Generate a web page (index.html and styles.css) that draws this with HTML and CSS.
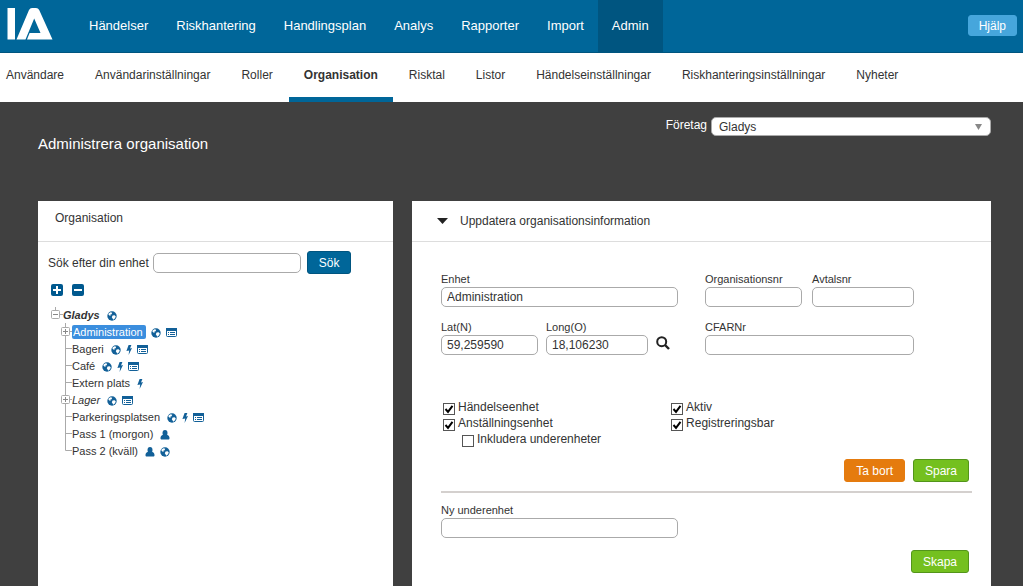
FILE: index.html
```html
<!DOCTYPE html>
<html lang="sv">
<head>
<meta charset="utf-8">
<meta name="viewport" content="width=device-width, initial-scale=1">
<title>Administrera organisation</title>
<link rel="stylesheet" href="styles.css">
</head>
<body>
<svg class="sprite" aria-hidden="true">
  <symbol id="globe" viewBox="0 0 10 10">
    <circle cx="5" cy="5" r="4.7" fill="#126098"/>
    <path d="M1.6 2.4 3.6 1.3 5.2 1.8 4.6 3.2 3.2 3.8 3.6 5 2.4 4.6 1.4 3.6zM5.6 4.6 7.6 4.3 8.8 5.4 8 7.2 6.4 8.7 5.6 7.4 4.8 6.2z" fill="#fff"/>
  </symbol>
  <symbol id="bolt" viewBox="0 0 6 10">
    <path d="M2.6 0h2.8L4 3.4 6 3 2.6 10l.6-4.600L.4 6z" fill="#126098"/>
  </symbol>
  <symbol id="card" viewBox="0 0 11 9">
    <rect x=".5" y=".5" width="10" height="8" rx="1" fill="#fff" stroke="#126098"/>
    <path d="M0 0h11v3H0z" fill="#126098"/>
    <path d="M2 4.500h1M4 4.500h5M2 6.500h1M4 6.500h5" stroke="#126098"/>
  </symbol>
  <symbol id="person" viewBox="0 0 10 10">
    <ellipse cx="5" cy="3" rx="2.500" ry="2.900" fill="#126098"/>
    <path d="M3.200 4.800C1.300 5.200.5 6.300.5 8.300c0 .8.500 1.300 1.300 1.300h6.400c.8 0 1.300-.5 1.300-1.300 0-2-.8-3.100-2.700-3.500z" fill="#126098"/>
  </symbol>
  <symbol id="leaf" viewBox="0 0 11 17">
    <path d="M4.500 0v17M4 8.500h7" stroke="#aaa" fill="none"/>
  </symbol>
  <symbol id="last" viewBox="0 0 11 17">
    <path d="M4.500 0v8.500H11" stroke="#aaa" fill="none"/>
  </symbol>
  <symbol id="closed" viewBox="0 0 11 17">
    <path d="M4.500 0v17M4 8.500h7" stroke="#aaa"/>
    <rect x=".5" y="4.500" width="8" height="8" rx="1" fill="#fff" stroke="#aaa"/>
    <path d="M2 8.500h5M4.500 6v5" stroke="#888"/>
  </symbol>
  <symbol id="open" viewBox="0 0 13 17">
    <path d="M5.500 1v4M9 8.500h4" stroke="#aaa"/>
    <rect x="1.500" y="4.500" width="8" height="8" rx="1" fill="#fff" stroke="#aaa"/>
    <path d="M3 8.500h5" stroke="#888"/>
  </symbol>
</svg>

<header class="topbar">
  <a class="logo" href="#" aria-label="IA">
    <svg width="46" height="32" viewBox="0 0 46 32" aria-hidden="true">
      <path d="M.5 0h7.500v31.500H.5z" fill="#fff"/>
      <path d="M9.500 31.500 22 2Q23 0 25 0h4Q31.200 0 32.200 2L45.500 31.500H20L22.600 25H33.500L27.200 10.500 18.500 31.500z" fill="#fff"/>
    </svg>
  </a>
  <nav class="mainnav">
    <a href="#">Händelser</a>
    <a href="#">Riskhantering</a>
    <a href="#">Handlingsplan</a>
    <a href="#">Analys</a>
    <a href="#">Rapporter</a>
    <a href="#">Import</a>
    <a href="#" class="active">Admin</a>
  </nav>
  <button type="button" class="btn help">Hjälp</button>
</header>

<nav class="subnav">
  <a href="#">Användare</a>
  <a href="#">Användarinställningar</a>
  <a href="#">Roller</a>
  <a href="#" class="active">Organisation</a>
  <a href="#">Risktal</a>
  <a href="#">Listor</a>
  <a href="#">Händelseinställningar</a>
  <a href="#">Riskhanteringsinställningar</a>
  <a href="#">Nyheter</a>
</nav>

<main class="page">
  <div class="pagehead">
    <h1>Administrera organisation</h1>
    <div class="company">
      <label for="company">Företag</label>
      <select id="company"><option>Gladys</option></select>
    </div>
  </div>

  <div class="panels">
    <section class="panel">
      <h2 class="panelhead">Organisation</h2>
      <div class="orgbody">
        <form class="search">
          <label for="find">Sök efter din enhet</label>
          <input id="find" type="text">
          <button type="button" class="btn primary">Sök</button>
        </form>
        <div class="expanders">
          <button type="button" class="plain" aria-label="Expandera alla">
            <svg width="12" height="12" viewBox="0 0 12 12"><rect width="12" height="12" rx="2" fill="#00598f"/><path d="M2 6h8M6 2v8" stroke="#fff" stroke-width="2"/></svg>
          </button>
          <button type="button" class="plain" aria-label="Minimera alla">
            <svg width="12" height="12" viewBox="0 0 12 12"><rect width="12" height="12" rx="2" fill="#00598f"/><path d="M2 6h8" stroke="#fff" stroke-width="2"/></svg>
          </button>
        </div>
        <ul class="tree">
          <li>
            <div class="node root">
              <button type="button" class="plain" aria-label="Stäng Gladys"><svg width="13" height="17"><use href="#open"/></svg></button>
              <a href="#">Gladys</a>
              <svg width="10" height="10"><use href="#globe"/></svg>
            </div>
            <ul>
              <li class="node">
                <button type="button" class="plain" aria-label="Öppna Administration"><svg width="11" height="17"><use href="#closed"/></svg></button>
                <a href="#" class="selected">Administration</a>
                <svg width="10" height="10"><use href="#globe"/></svg>
                <svg width="11" height="9"><use href="#card"/></svg>
              </li>
              <li class="node">
                <svg class="branch" width="11" height="17"><use href="#leaf"/></svg>
                <a href="#">Bageri</a>
                <svg width="10" height="10"><use href="#globe"/></svg>
                <svg width="6" height="10"><use href="#bolt"/></svg>
                <svg width="11" height="9"><use href="#card"/></svg>
              </li>
              <li class="node">
                <svg class="branch" width="11" height="17"><use href="#leaf"/></svg>
                <a href="#">Café</a>
                <svg width="10" height="10"><use href="#globe"/></svg>
                <svg width="6" height="10"><use href="#bolt"/></svg>
                <svg width="11" height="9"><use href="#card"/></svg>
              </li>
              <li class="node">
                <svg class="branch" width="11" height="17"><use href="#leaf"/></svg>
                <a href="#">Extern plats</a>
                <svg width="6" height="10"><use href="#bolt"/></svg>
              </li>
              <li class="node">
                <button type="button" class="plain" aria-label="Öppna Lager"><svg width="11" height="17"><use href="#closed"/></svg></button>
                <a href="#" class="inactive">Lager</a>
                <svg width="10" height="10"><use href="#globe"/></svg>
                <svg width="11" height="9"><use href="#card"/></svg>
              </li>
              <li class="node">
                <svg class="branch" width="11" height="17"><use href="#leaf"/></svg>
                <a href="#">Parkeringsplatsen</a>
                <svg width="10" height="10"><use href="#globe"/></svg>
                <svg width="6" height="10"><use href="#bolt"/></svg>
                <svg width="11" height="9"><use href="#card"/></svg>
              </li>
              <li class="node">
                <svg class="branch" width="11" height="17"><use href="#leaf"/></svg>
                <a href="#">Pass 1 (morgon)</a>
                <svg width="10" height="10"><use href="#person"/></svg>
              </li>
              <li class="node">
                <svg class="branch" width="11" height="17"><use href="#last"/></svg>
                <a href="#">Pass 2 (kväll)</a>
                <svg width="10" height="10"><use href="#person"/></svg>
                <svg width="10" height="10"><use href="#globe"/></svg>
              </li>
            </ul>
          </li>
        </ul>
      </div>
    </section>

    <section class="panel">
      <h2 class="panelhead wide">
        <svg width="11" height="6" viewBox="0 0 11 6" aria-hidden="true"><path d="M0 0h11L5.500 6z" fill="#222"/></svg>
        Uppdatera organisationsinformation
      </h2>
      <form class="details">
        <div class="fields">
          <div class="field unit"><label for="unit">Enhet</label><input id="unit" type="text" value="Administration"></div>
          <div class="pair right">
            <div class="field"><label for="orgno">Organisationsnr</label><input id="orgno" type="text"></div>
            <div class="field"><label for="contract">Avtalsnr</label><input id="contract" type="text"></div>
          </div>
          <div class="coords">
            <div class="field"><label for="lat">Lat(N)</label><input id="lat" type="text" value="59,259590"></div>
            <div class="field"><label for="long">Long(O)</label><input id="long" type="text" value="18,106230"></div>
            <button type="button" class="plain lens" aria-label="Sök position">
              <svg width="14" height="14" viewBox="0 0 14 14"><circle cx="5.700" cy="5.700" r="4.500" fill="none" stroke="#222" stroke-width="2"/><path d="M9 9l4 4" stroke="#222" stroke-width="2.400"/></svg>
            </button>
          </div>
          <div class="field right"><label for="cfar">CFARNr</label><input id="cfar" type="text"></div>
        </div>
        <div class="checks">
          <div>
            <label><input type="checkbox" checked>Händelseenhet</label>
            <label><input type="checkbox" checked>Anställningsenhet</label>
            <label class="nested"><input type="checkbox">Inkludera underenheter</label>
          </div>
          <div>
            <label><input type="checkbox" checked>Aktiv</label>
            <label><input type="checkbox" checked>Registreringsbar</label>
          </div>
        </div>
        <div class="actions">
          <button type="button" class="btn danger">Ta bort</button>
          <button type="button" class="btn success">Spara</button>
        </div>
        <hr>
        <div class="field unit"><label for="sub">Ny underenhet</label><input id="sub" type="text"></div>
        <div class="actions">
          <button type="button" class="btn success">Skapa</button>
        </div>
      </form>
    </section>
  </div>
</main>
</body>
</html>
```

FILE: styles.css
```css
* { box-sizing: border-box; }

body {
  display: flex;
  flex-direction: column;
  min-height: 100vh;
  margin: 0;
  background: #404040;
  color: #333;
  font: 12px/16px Arial, "Liberation Sans", sans-serif;
}

a { color: inherit; text-decoration: none; }
h1, h2, ul { margin: 0; padding: 0; font-weight: normal; }
ul { list-style: none; }
.sprite { display: none; }

/* Header */
.topbar {
  display: flex;
  height: 53px;
  padding: 0 6px 0 7px;
  background: #069;
  border-bottom: 1px solid #00557f;
  color: #fff;
}
.logo { width: 68px; padding-top: 8px; }
.logo svg { display: block; }
.mainnav { display: flex; flex: 1; font-size: 13px; }
.mainnav a { padding: 18px 14px 0; }
.mainnav .active { background: #005580; }

.subnav {
  display: flex;
  gap: 1px;
  height: 49px;
  padding-right: 6px;
  background: #fff;
}
.subnav a { padding: 14px 15px 0; }
.subnav a:first-child { padding-left: 6px; }
.subnav .active { border-bottom: 5px solid #069; font-weight: bold; }

/* Buttons */
.btn {
  height: 23px;
  padding: 0 11px;
  border: 1px solid #069;
  border-radius: 3px;
  color: #fff;
  font: 12px/16px Arial, "Liberation Sans", sans-serif;
  cursor: pointer;
}
.help { height: 21px; margin-top: 15px; padding: 0 10px; background: #46a6dc; border-color: #46a6dc; }
.primary { background: #069; border-color: #005580; }
.danger { background: #e57b0e; border-color: #e57b0e; }
.success { background: #74c01f; border-color: #53951a; }
.plain { display: block; padding: 0; border: 0; background: none; cursor: pointer; }
.plain svg { display: block; }

/* Page */
.page { display: flex; flex: 1; flex-direction: column; padding: 15px 32px 0 38px; }
.pagehead { display: flex; justify-content: space-between; height: 84px; color: #fff; }
h1 { padding-top: 17px; font-size: 15px; line-height: 20px; }
.company { display: flex; gap: 4px; }
.company select {
  width: 280px;
  height: 19px;
  padding: 0 7px;
  appearance: none;
  border: 1px solid #aaa;
  border-radius: 5px;
  background: #fff url("data:image/svg+xml,%3Csvg xmlns='http://www.w3.org/2000/svg' width='7' height='6'%3E%3Cpath d='M0 0h7L3.500 6z' fill='%23888'/%3E%3C/svg%3E") right 8px center no-repeat;
  color: #333;
  font: inherit;
}

.panels { display: grid; flex: 1; grid-template-columns: 355fr 579fr; gap: 19px; }
.panel { background: #fff; }
.panelhead {
  height: 41px;
  padding: 9px 17px;
  border-bottom: 1px solid #ddd;
  font-size: 12px;
}
.wide { display: flex; align-items: center; gap: 12px; padding: 0 25px; }

input[type="text"] {
  width: 100%;
  height: 20px;
  padding: 0 5px;
  border: 1px solid #aaa;
  border-radius: 5px;
  background: #fff;
  color: #333;
  font: inherit;
}

/* Organisation tree */
.orgbody { padding: 9px 10px; }
.search { display: flex; align-items: center; gap: 4px; }
.search input[type="text"] { width: 148px; margin-right: 2px; }
.expanders { display: flex; gap: 9px; padding: 10px 3px; }
.tree { padding-left: 2px; font-size: 11px; }
.tree ul { padding-left: 11px; }
.node { display: flex; align-items: center; gap: 5px; height: 17px; }
.node .plain, .node .branch { margin-right: -5px; }
.node a { padding-right: 2px; line-height: 14px; }
.node a ~ svg { margin-top: 2px; }
.root a { font-style: italic; font-weight: bold; }
.inactive { font-style: italic; }
.node .selected { padding: 0 3px 0 1px; border-radius: 2px; background: #3b8ede; color: #fff; }

/* Details form */
.details { padding: 29px 19px 14px 29px; }
.fields { display: grid; grid-template-columns: 237fr 294fr; gap: 12px 0; }
.field { display: flex; flex-direction: column; }
.field label { font-size: 11px; }
.unit { max-width: 237px; }
.right { width: 209px; margin-left: 27px; }
.pair { display: grid; grid-template-columns: 97px 102px; gap: 10px; }
.coords { display: grid; grid-template-columns: 97px 102px 14px; gap: 8px; }
.lens { align-self: end; padding-bottom: 5px; }

.checks { display: flex; gap: 68px; padding-top: 44px; }
.checks label { display: flex; gap: 3px; padding-left: 2px; }
.checks .nested { padding-left: 21px; }
.checks input {
  width: 12px;
  height: 12px;
  margin: 4px 0 0;
  appearance: none;
  border: 1px solid #555;
  background: #fff;
}
.checks input:checked {
  background: #fff url("data:image/svg+xml,%3Csvg xmlns='http://www.w3.org/2000/svg' width='10' height='10'%3E%3Cpath d='M1.500 5 4 7.800 8.500 1.800' fill='none' stroke='%23000' stroke-width='2'/%3E%3C/svg%3E") center no-repeat;
}

.actions { display: flex; justify-content: flex-end; gap: 8px; padding: 12px 3px 9px 0; }
hr { height: 2px; margin: 0 0 9px; border: 0; background: #d4d0ce; }
```
